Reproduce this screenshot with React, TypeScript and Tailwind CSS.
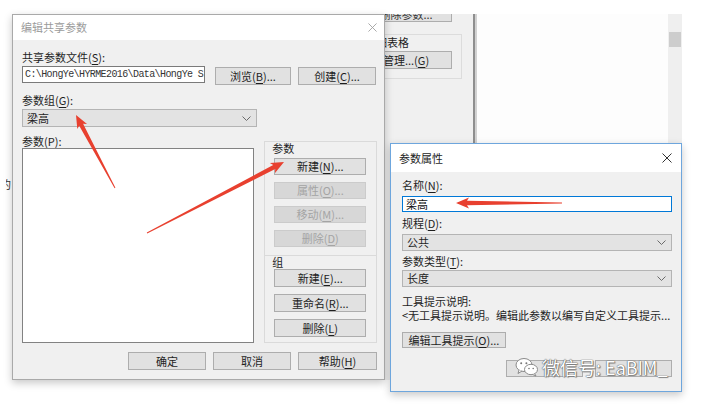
import React from 'react';
import clsx from 'clsx';

// mnemonic letter, underlined like a Windows access key
const U = ({ c }: { c: string }) => <span className="underline underline-offset-2">{c}</span>;

function Btn({
  children,
  className,
  disabled,
}: {
  children?: React.ReactNode;
  className?: string;
  disabled?: boolean;
}) {
  return (
    <div
      className={clsx(
        'flex items-center justify-center whitespace-nowrap border text-[11px] leading-none',
        disabled
          ? 'border-[#cbcbcb] bg-[#d7d7d7] text-[#a4a4a4]'
          : 'border-[#adadad] bg-[#e1e1e1] text-[#1e1e1e]',
        className
      )}
    >
      {children}
    </div>
  );
}

const Chevron = () => (
  <svg width="9" height="5" viewBox="0 0 9 5">
    <path d="M0.5 0.5 L4.5 4.5 L8.5 0.5" fill="none" stroke="#6a6a6a" strokeWidth="1" />
  </svg>
);

const CloseX = ({ color, size }: { color: string; size: number }) => (
  <svg width={size} height={size} viewBox="0 0 10 10">
    <path d="M0.5 0.5 L9.5 9.5 M9.5 0.5 L0.5 9.5" stroke={color} strokeWidth="1" />
  </svg>
);

function Combo({ value, className }: { value: string; className?: string }) {
  return (
    <div
      className={clsx(
        'flex items-center justify-between border border-[#b4b4b4] bg-[#e3e3e3] pl-[4px] pr-[5px] text-[11px] leading-none text-[#1e1e1e]',
        className
      )}
    >
      <span>{value}</span>
      <Chevron />
    </div>
  );
}

const Label = ({ children, className }: { children: React.ReactNode; className?: string }) => (
  <div className={clsx('text-[11px] leading-[14px] text-[#1e1e1e]', className)}>{children}</div>
);

// tapered red annotation arrow, tail -> tip
function arrowPoints(tx: number, ty: number, px: number, py: number) {
  const dx = px - tx;
  const dy = py - ty;
  const len = Math.hypot(dx, dy);
  const ux = dx / len;
  const uy = dy / len;
  const nx = -uy;
  const ny = ux;
  const L = 13;
  const hw = 5.5;
  const sw = 2.2;
  const tw = 0.4;
  const bx = px - ux * L;
  const by = py - uy * L;
  const nb = 2; // slight notch at the back of the head
  const pts = [
    [tx + nx * tw, ty + ny * tw],
    [bx + ux * nb + nx * sw, by + uy * nb + ny * sw],
    [bx + nx * hw, by + ny * hw],
    [px, py],
    [bx - nx * hw, by - ny * hw],
    [bx + ux * nb - nx * sw, by + uy * nb - ny * sw],
    [tx - nx * tw, ty - ny * tw],
  ];
  return pts.map((p) => p.map((v) => v.toFixed(1)).join(',')).join(' ');
}

const arrows = [
  [115, 188, 76, 115],
  [147, 233, 284, 162],
  [562, 203, 456, 203],
];

const WeChatLogo = () => (
  <svg width="24" height="20" viewBox="0 0 24 20">
    <ellipse cx="9" cy="8" rx="8" ry="6.5" fill="#fff" stroke="#8a8a8a" strokeWidth="1" />
    <path d="M4 13 L3 16.5 L7 14" fill="#fff" stroke="#8a8a8a" strokeWidth="1" />
    <ellipse cx="16" cy="12.5" rx="6.5" ry="5.2" fill="#fff" stroke="#8a8a8a" strokeWidth="1" />
    <path d="M19.5 16.5 L21 19 L17.5 17.4" fill="#fff" stroke="#8a8a8a" strokeWidth="1" />
    <circle cx="6.2" cy="6.2" r="1" fill="#777" />
    <circle cx="11.4" cy="6.2" r="1" fill="#777" />
    <circle cx="14" cy="11.5" r="0.8" fill="#777" />
    <circle cx="18.2" cy="11.5" r="0.8" fill="#777" />
  </svg>
);

export default function App() {
  return (
    <div className="relative h-[406px] w-[712px] overflow-hidden bg-white font-['Noto_Sans_CJK_SC','Noto_Sans',sans-serif]">
      {/* window behind, left sliver */}
      <div className="absolute left-[6px] top-[14px] h-[366px] w-[6px] overflow-hidden">
        <div className="ml-[-6px] mt-[163px] text-[11px] leading-[14px] text-[#333]">的</div>
      </div>

      {/* window behind, right part */}
      <div className="absolute left-[340px] top-[14px] flex h-[366px] w-[342px]">
        <div className="flex w-[133px] flex-col bg-[#f0f0f0] pl-[20px]">
          <div className="h-[8px] w-[92px] overflow-hidden border-x border-b border-[#adadad] bg-[#e1e1e1] text-center text-[11px] leading-[14px] text-[#333]">
            <div className="mt-[-7px]">删除参数...</div>
          </div>
          <div className="ml-[-4px] mt-[12px] flex w-[106px] flex-col border border-[#dcdcdc] pb-[9px]">
            <div className="pl-[8px] text-[11px] leading-[14px] text-[#1e1e1e]">明细表格</div>
            <Btn className="ml-[3px] mt-[2px] h-[18px] w-[92px]">
              管理...(<U c="G" />)
            </Btn>
          </div>
        </div>
        <div className="w-[2px] bg-[#8f8f8f]" />
        <div className="w-[2px] bg-[#d2d2d2]" />
        <div className="flex-1 bg-[#fdfdfd]" />
        <div className="w-[14px] bg-[#efefef] px-[1px] pt-[18px]">
          <div className="h-[15px] bg-[#cdcdcd]" />
        </div>
      </div>

      {/* 编辑共享参数 */}
      <div className="absolute left-[12px] top-[14px] flex w-[373px] flex-col border border-[#a9a9a9] bg-[#f0f0f0] shadow-[0_3px_8px_rgba(0,0,0,0.22)]">
        <div className="flex h-[25px] items-center justify-between bg-white pl-[8px] pr-[7px]">
          <span className="text-[11px] text-[#9b9b9b]">编辑共享参数</span>
          <CloseX color="#a0a0a0" size={9} />
        </div>
        <div className="flex flex-col pb-[9px] pl-[9px] pr-[7px] pt-[10px]">
          <Label>
            共享参数文件(<U c="S" />):
          </Label>
          <div className="mt-[2px] flex h-[19px] items-start">
            <div className="h-[17px] w-[183px] overflow-hidden whitespace-nowrap border border-[#7a7a7a] bg-white pl-[2px] font-['Liberation_Mono',monospace] text-[10px] leading-[15px] tracking-[-0.6px] text-[#333]">
              C:\HongYe\HYRME2016\Data\HongYe SI
            </div>
            <Btn className="ml-[10px] mt-[1px] h-[18px] w-[76px]">
              浏览(<U c="B" />)...
            </Btn>
            <Btn className="ml-[7px] mt-[1px] h-[18px] w-[78px]">
              创建(<U c="C" />)...
            </Btn>
          </div>
          <Label className="mt-[8px]">
            参数组(<U c="G" />):
          </Label>
          <Combo className="mt-[2px] h-[18px] w-[235px]" value="梁高" />

          <div className="mt-[8px] flex h-[208px]">
            <div className="flex w-[233px] flex-col">
              <div className="h-[13px] text-[11px] leading-[12px] text-[#1e1e1e]">
                参数(<U c="P" />):
              </div>
              <div className="h-[195px] border border-[#828282] bg-white" />
            </div>
            <div className="ml-[10px] flex w-[113px] flex-col">
              <div className="mt-[6px] flex h-[115px] flex-col border border-[#dadada]">
                <div className="ml-[7px] text-[11px] leading-[12px] text-[#1e1e1e]">参数</div>
                <div className="ml-[9px] mt-[4px] flex flex-col gap-[7px]">
                  <Btn className="h-[17px] w-[92px]">
                    新建(<U c="N" />)...
                  </Btn>
                  <Btn disabled className="h-[17px] w-[92px]">
                    属性(<U c="O" />)...
                  </Btn>
                  <Btn disabled className="h-[17px] w-[92px]">
                    移动(<U c="M" />)...
                  </Btn>
                  <Btn disabled className="h-[17px] w-[92px]">
                    删除(<U c="D" />)
                  </Btn>
                </div>
              </div>
              <div className="flex h-[87px] flex-col border-x border-b border-[#dadada]">
                <div className="ml-[7px] text-[11px] leading-[12px] text-[#1e1e1e]">组</div>
                <div className="ml-[9px] mt-[1px] flex flex-col gap-[7px]">
                  <Btn className="h-[18px] w-[92px]">
                    新建(<U c="E" />)...
                  </Btn>
                  <Btn className="h-[18px] w-[92px]">
                    重命名(<U c="R" />)...
                  </Btn>
                  <Btn className="h-[18px] w-[92px]">
                    删除(<U c="L" />)
                  </Btn>
                </div>
              </div>
            </div>
          </div>

          <div className="mt-[9px] flex justify-end gap-[7px]">
            <Btn className="h-[18px] w-[78px]">确定</Btn>
            <Btn className="h-[18px] w-[78px]">取消</Btn>
            <Btn className="h-[18px] w-[79px]">
              帮助(<U c="H" />)
            </Btn>
          </div>
        </div>
      </div>

      {/* 参数属性 */}
      <div className="absolute left-[390px] top-[143px] flex w-[292px] flex-col border border-[#6ea6dd] bg-[#f0f0f0] shadow-[0_3px_8px_rgba(0,0,0,0.22)]">
        <div className="flex h-[28px] items-center justify-between bg-white pl-[8px] pr-[9px]">
          <span className="text-[11px] text-[#1e1e1e]">参数属性</span>
          <CloseX color="#333" size={10} />
        </div>
        <div className="flex flex-col pb-[14px] pl-[11px] pr-[9px] pt-[6px]">
          <Label>
            名称(<U c="N" />):
          </Label>
          <div className="mt-[4px] h-[16px] border border-[#0078d7] bg-white pl-[3px] text-[11px] leading-[14px] text-[#111]">
            梁高
          </div>
          <Label className="mt-[4px]">
            规程(<U c="D" />):
          </Label>
          <Combo className="mt-[4px] h-[17px]" value="公共" />
          <Label className="mt-[3px]">
            参数类型(<U c="T" />):
          </Label>
          <Combo className="mt-[2px] h-[17px]" value="长度" />
          <Label className="mt-[7px]">工具提示说明:</Label>
          <Label className="whitespace-nowrap">&lt;无工具提示说明。编辑此参数以编写自定义工具提示...</Label>
          <Btn className="mt-[10px] h-[16px] w-[104px]">
            编辑工具提示(<U c="O" />)...
          </Btn>
          <div className="mt-[12px] flex justify-end gap-[12px]">
            <Btn className="h-[17px] w-[77px]" />
            <Btn className="h-[17px] w-[77px]" />
          </div>
        </div>
      </div>

      {/* watermark */}
      <div className="absolute left-[515px] top-[357px] flex items-center gap-[3px]">
        <WeChatLogo />
        <span className="text-[18px] leading-[20px] text-white [text-shadow:0_0_1px_#555,0_0_1px_#555,1px_1px_1px_#888]">
          微信号: EaBIM_
        </span>
      </div>

      {/* red arrows */}
      <svg className="pointer-events-none absolute inset-0" width="712" height="406">
        {arrows.map(([tx, ty, px, py], i) => (
          <polygon key={i} points={arrowPoints(tx, ty, px, py)} fill="#e8402f" />
        ))}
      </svg>
    </div>
  );
}
